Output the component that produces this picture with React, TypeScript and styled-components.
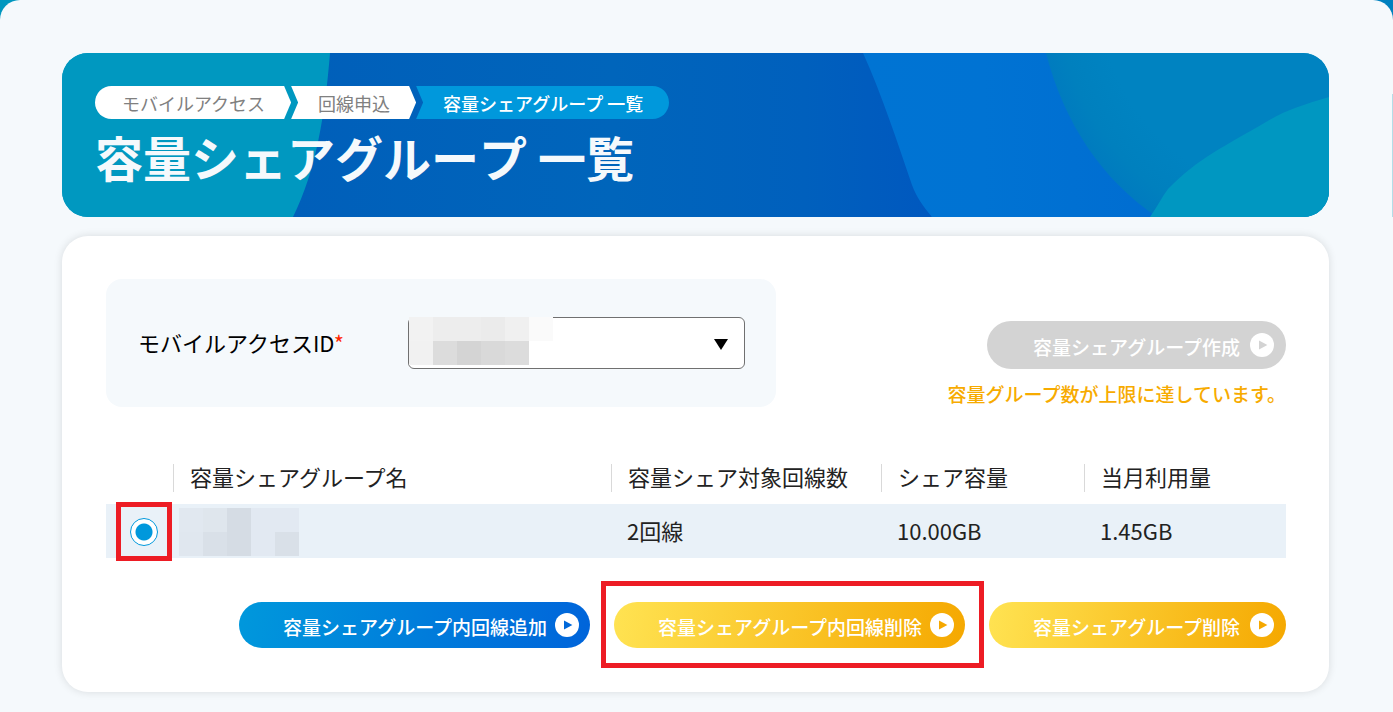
import React from "react";
import styled, { createGlobalStyle } from "styled-components";

const GlobalStyle = createGlobalStyle`
  *, *::before, *::after { box-sizing: border-box; }
  body {
    margin: 0;
    background: linear-gradient(90deg, #0097bf 0%, #0097bf 50%, #0080bf 100%);
    color: #222;
    font-family: "Noto Sans CJK JP", sans-serif;
  }
  button, select { font-family: inherit; }
`;

const Page = styled.main`
  position: relative;
  min-height: 100vh;
  padding: 53px 64px 20px 62px;
  border-radius: 20px 20px 0 0;
  background: #f5f9fc;
`;

const EdgeLine = styled.div`
  position: absolute;
  top: 94px;
  right: 0;
  width: 1px;
  height: 123px;
  background: #b4dde8;
`;

const Banner = styled.header`
  position: relative;
  overflow: hidden;
  padding: 33px;
  height: 164px;
  border-radius: 26px;
  background: #0098c0;
`;

const BannerArt = styled.svg`
  position: absolute;
  inset: 0;
  width: 100%;
  height: 100%;
`;

const BannerBody = styled.div`
  position: relative;
`;

const Crumbs = styled.ol`
  display: flex;
  margin: 0;
  padding: 0;
  list-style: none;
`;

const shapes = {
  first: "polygon(0 0, calc(100% - 7px) 0, 100% 50%, calc(100% - 7px) 100%, 0 100%)",
  middle: "polygon(0 0, calc(100% - 7px) 0, 100% 50%, calc(100% - 7px) 100%, 0 100%, 7px 50%)",
  last: "polygon(0 0, 100% 0, 100% 100%, 0 100%, 7px 50%)",
};

const Crumb = styled.li<{ $place: keyof typeof shapes }>`
  height: 33px;
  padding: 0 26px 0 27px;
  line-height: 34px;
  font-size: 18px;
  clip-path: ${(p) => shapes[p.$place]};
  border-radius: ${(p) =>
    p.$place === "first" ? "17px 0 0 17px" : p.$place === "last" ? "0 17px 17px 0" : "0"};
  background: ${(p) => (p.$place === "last" ? "#0098dc" : "#fff")};
  color: ${(p) => (p.$place === "last" ? "#fff" : "#808080")};
  font-weight: ${(p) => (p.$place === "last" ? 500 : 400)};
  a { color: inherit; text-decoration: none; }
`;

const Title = styled.h1`
  margin: 1px 0 0;
  font-size: 48px;
  line-height: 72px;
  font-weight: 700;
  font-kerning: none;
  color: #f5f9fc;
`;

const Card = styled.section`
  margin-top: 19px;
  padding: 43px 43px 44px 44px;
  border-radius: 26px;
  background: #fff;
  box-shadow: 0 0 8px rgba(0, 0, 0, 0.12);
`;

const TopRow = styled.div`
  display: flex;
  justify-content: space-between;
`;

const Filter = styled.div`
  display: flex;
  align-items: center;
  justify-content: space-between;
  flex: 0 1 670px;
  height: 128px;
  padding: 0 31px 0 32px;
  border-radius: 16px;
  background: #f5f9fc;
`;

const Label = styled.label`
  padding-bottom: 2px;
  font-size: 22px;
  line-height: 32px;
  color: #000;
`;

const Required = styled.span`
  color: #ff2800;
`;

const SelectWrap = styled.div`
  position: relative;
  width: 337px;
`;

const Select = styled.select`
  display: block;
  width: 100%;
  height: 52px;
  padding: 0 40px 0 16px;
  appearance: none;
  border: 1px solid #707070;
  border-radius: 6px;
  background: #fff;
  font-size: 19px;
`;

const Arrow = styled.svg`
  position: absolute;
  top: 22px;
  right: 17px;
  pointer-events: none;
`;

const Mosaic = styled.div<{ $columns: number }>`
  display: grid;
  grid-template-columns: repeat(${(p) => p.$columns}, 24px);
  grid-auto-rows: 24px;
  width: max-content;
`;

const SelectMosaic = styled(Mosaic)`
  position: absolute;
  top: 0;
  left: 1px;
  pointer-events: none;
`;

const Cell = styled.i<{ $tone: string }>`
  background: ${(p) => p.$tone};
`;

const CreateArea = styled.div`
  display: flex;
  flex-direction: column;
  align-items: flex-end;
  padding-top: 42px;
`;

const Notice = styled.p`
  margin: 12px 0 0;
  font-size: 19px;
  line-height: 26px;
  font-weight: 500;
  color: #f7ab00;
`;

const fills = {
  grey: { background: "#d3d3d3", ink: "#d3d3d3" },
  blue: { background: "linear-gradient(100deg, #0098dc, #0064da)", ink: "#0068d9" },
  yellow: { background: "linear-gradient(100deg, #ffe352, #f5a800)", ink: "#f5a800" },
};

const PillButton = styled.button<{ $fill: keyof typeof fills; $wide?: boolean }>`
  display: flex;
  align-items: center;
  justify-content: flex-end;
  gap: ${(p) => (p.$wide ? 8 : 10)}px;
  width: ${(p) => (p.$wide ? 351 : p.$fill === "grey" ? 299 : 297)}px;
  height: ${(p) => (p.$fill === "grey" ? 48 : 46)}px;
  padding: 0 ${(p) => (p.$wide ? 11 : 12)}px 0 0;
  border: 0;
  border-radius: 24px;
  background: ${(p) => fills[p.$fill].background};
  color: #fff;
  font-size: 19px;
  line-height: 28px;
  font-weight: 500;
  white-space: nowrap;
`;

const PillText = styled.span`
  padding-top: 3px;
`;

const Table = styled.table`
  width: 100%;
  margin-top: 48px;
  border-collapse: collapse;
  table-layout: fixed;
  font-size: 22px;
  line-height: 24px;
`;

const Col = styled.col<{ $width?: number }>`
  width: ${(p) => (p.$width ? `${p.$width}px` : "auto")};
`;

const HeadCell = styled.th`
  height: 49px;
  padding: 9px 0 12px;
  font-weight: 400;
  text-align: left;
  white-space: nowrap;
`;

const HeadText = styled.div`
  height: 28px;
  padding-left: 16px;
  border-left: 1px solid #d9d9d9;
`;

const DataCell = styled.td`
  height: 54px;
  padding: 0 0 2px 16px;
  background: #e9f1f8;
`;

const NameCell = styled(DataCell)`
  padding: 2px 0 0 6px;
`;

const RadioCell = styled(DataCell)`
  padding: 0 0 0 10px;
`;

const RadioFrame = styled.div`
  display: flex;
  align-items: center;
  justify-content: center;
  width: 56px;
  height: 59px;
  margin: -2px 0 -3px;
  border: 5px solid #ed1c24;
`;

const Radio = styled.input`
  width: 28px;
  height: 28px;
  margin: 0;
  appearance: none;
  border: 1px solid #0098dc;
  border-radius: 50%;
  background: radial-gradient(circle, #0098dc 8px, #fff 9px);
`;

const Actions = styled.div`
  display: flex;
  justify-content: flex-end;
  gap: 24px;
  margin-top: 44px;
`;

const Highlight = styled.div`
  position: relative;
  &::before {
    content: "";
    position: absolute;
    inset: -21px -19px -20px -13px;
    border: 5px solid #ed1c24;
    pointer-events: none;
  }
`;

function PlayIcon({ ink }: { ink: string }) {
  return (
    <svg width="24" height="24" viewBox="0 0 24 24" aria-hidden="true">
      <circle cx="12" cy="12" r="12" fill="#fff" />
      <path d="M9 7.4 17.4 12 9 16.6Z" fill={ink} />
    </svg>
  );
}

type PillProps = {
  fill: keyof typeof fills;
  wide?: boolean;
  disabled?: boolean;
  children: React.ReactNode;
};

function Pill({ fill, wide, disabled, children }: PillProps) {
  return (
    <PillButton type="button" $fill={fill} $wide={wide} disabled={disabled}>
      <PillText>{children}</PillText>
      <PlayIcon ink={fills[fill].ink} />
    </PillButton>
  );
}

const idTones = [
  "#f2f2f2", "#ededed", "#ededed", "#ebebeb", "#f0f0f0", "#fafafa",
  "#f1f1f1", "#dcdcdc", "#d4d4d4", "#d9d9d9", "#dcdcdc", "transparent",
];

const nameTones = [
  "#e1e8f0", "#dfe6ed", "#d5dce4", "#e2e9f2", "#e2e9f2",
  "#e0e7ef", "#d9e0e8", "#d5dce4", "#e2e9f2", "#d9e0e8",
];

export default function App() {
  return (
    <>
      <GlobalStyle />
      <Page>
        <EdgeLine />
        <Banner>
          <BannerArt viewBox="0 0 1267 164" preserveAspectRatio="none" aria-hidden="true">
            <defs>
              <linearGradient id="deep" x1="0" y1="0" x2="1" y2="0">
                <stop offset="0" stopColor="#005fba" />
                <stop offset="0.5" stopColor="#0065bb" />
                <stop offset="0.8" stopColor="#0060bd" />
                <stop offset="1" stopColor="#0058bf" />
              </linearGradient>
              <linearGradient id="bright" x1="0" y1="0" x2="1" y2="0">
                <stop offset="0" stopColor="#0074d3" />
                <stop offset="0.4" stopColor="#0073d3" />
                <stop offset="1" stopColor="#006dd1" />
              </linearGradient>
              <radialGradient id="orb" gradientUnits="userSpaceOnUse" cx="1240" cy="-60" r="270">
                <stop offset="0.75" stopColor="#0083c1" />
                <stop offset="0.9" stopColor="#0080be" />
                <stop offset="1" stopColor="#007abf" />
              </radialGradient>
            </defs>
            <path d="M0 0H268C263 62 254 118 231 164H0Z" fill="#0098c0" />
            <path d="M268 0H810L870 164H231C254 118 263 62 268 0Z" fill="url(#deep)" />
            <path d="M801 0H1100V164H870C861 153 855 145 850 132C836 91 820 42 801 0Z" fill="url(#bright)" />
            <path d="M984 0H1267V164H1095C1040 127 1002 70 984 0Z" fill="url(#orb)" />
            <path d="M1267 44C1240 52 1222 58 1204 69C1165 92 1136 105 1106 136C1100 144 1095 154 1088 164H1267Z" fill="#0097c1" />
          </BannerArt>
          <BannerBody>
            <nav aria-label="パンくず">
              <Crumbs>
                <Crumb $place="first"><a href="#access">モバイルアクセス</a></Crumb>
                <Crumb $place="middle"><a href="#apply">回線申込</a></Crumb>
                <Crumb $place="last" aria-current="page">容量シェアグループ 一覧</Crumb>
              </Crumbs>
            </nav>
            <Title>容量シェアグループ 一覧</Title>
          </BannerBody>
        </Banner>

        <Card>
          <TopRow>
            <Filter>
              <Label htmlFor="access-id">
                モバイルアクセスID<Required>*</Required>
              </Label>
              <SelectWrap>
                <Select id="access-id" defaultValue="">
                  <option value="" />
                </Select>
                <SelectMosaic $columns={6} aria-hidden="true">
                  {idTones.map((tone, i) => <Cell key={i} $tone={tone} />)}
                </SelectMosaic>
                <Arrow width="14" height="11" viewBox="0 0 14 11" aria-hidden="true">
                  <path d="M0 0H14L7 11Z" fill="#000" />
                </Arrow>
              </SelectWrap>
            </Filter>
            <CreateArea>
              <Pill fill="grey" disabled>容量シェアグループ作成</Pill>
              <Notice>容量グループ数が上限に達しています。</Notice>
            </CreateArea>
          </TopRow>

          <Table>
            <colgroup>
              <Col $width={67} />
              <Col />
              <Col $width={270} />
              <Col $width={203} />
              <Col $width={202} />
            </colgroup>
            <thead>
              <tr>
                <HeadCell />
                <HeadCell scope="col"><HeadText>容量シェアグループ名</HeadText></HeadCell>
                <HeadCell scope="col"><HeadText>容量シェア対象回線数</HeadText></HeadCell>
                <HeadCell scope="col"><HeadText>シェア容量</HeadText></HeadCell>
                <HeadCell scope="col"><HeadText>当月利用量</HeadText></HeadCell>
              </tr>
            </thead>
            <tbody>
              <tr>
                <RadioCell>
                  <RadioFrame>
                    <Radio type="radio" name="group" defaultChecked aria-label="グループを選択" />
                  </RadioFrame>
                </RadioCell>
                <NameCell>
                  <Mosaic $columns={5} aria-hidden="true">
                    {nameTones.map((tone, i) => <Cell key={i} $tone={tone} />)}
                  </Mosaic>
                </NameCell>
                <DataCell>2回線</DataCell>
                <DataCell>10.00GB</DataCell>
                <DataCell>1.45GB</DataCell>
              </tr>
            </tbody>
          </Table>

          <Actions>
            <Pill fill="blue" wide>容量シェアグループ内回線追加</Pill>
            <Highlight>
              <Pill fill="yellow" wide>容量シェアグループ内回線削除</Pill>
            </Highlight>
            <Pill fill="yellow">容量シェアグループ削除</Pill>
          </Actions>
        </Card>
      </Page>
    </>
  );
}
